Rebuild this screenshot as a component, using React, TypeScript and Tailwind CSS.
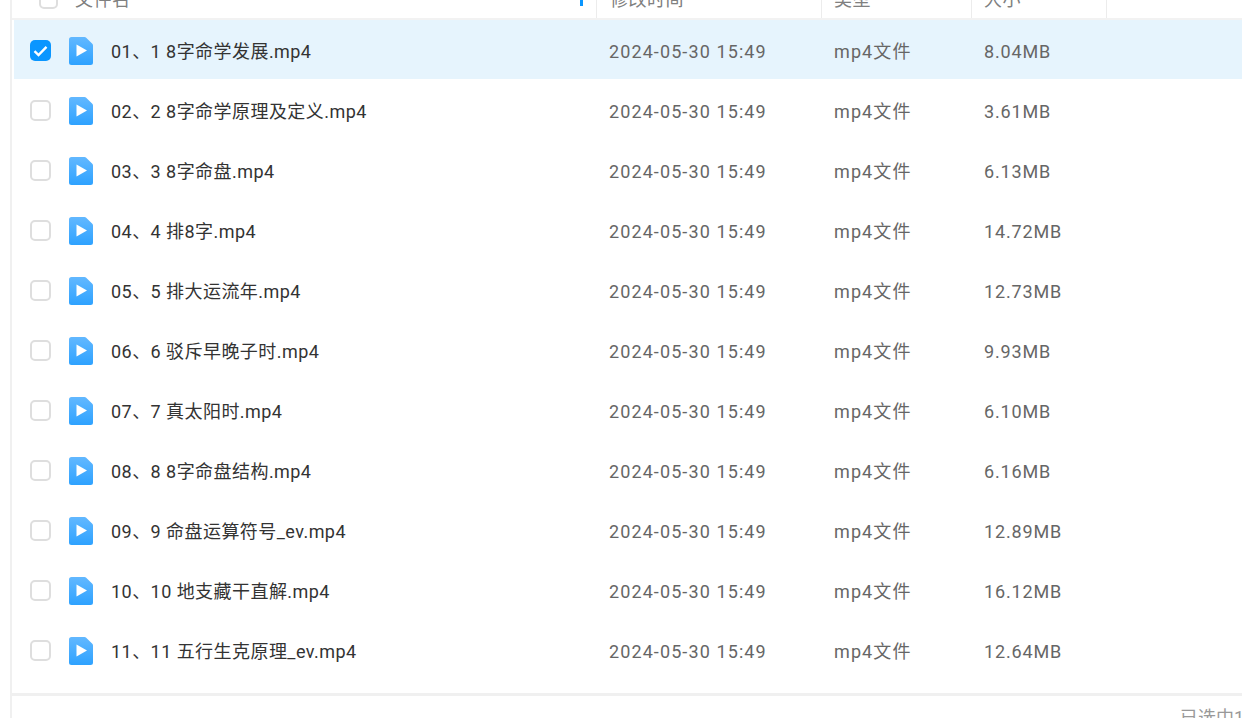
const files = [
  { name: "01、1 8字命学发展.mp4", size: "8.04MB", checked: true },
  { name: "02、2 8字命学原理及定义.mp4", size: "3.61MB" },
  { name: "03、3 8字命盘.mp4", size: "6.13MB" },
  { name: "04、4 排8字.mp4", size: "14.72MB" },
  { name: "05、5 排大运流年.mp4", size: "12.73MB" },
  { name: "06、6 驳斥早晚子时.mp4", size: "9.93MB" },
  { name: "07、7 真太阳时.mp4", size: "6.10MB" },
  { name: "08、8 8字命盘结构.mp4", size: "6.16MB" },
  { name: "09、9 命盘运算符号_ev.mp4", size: "12.89MB" },
  { name: "10、10 地支藏干直解.mp4", size: "16.12MB" },
  { name: "11、11 五行生克原理_ev.mp4", size: "12.64MB" },
];

function VideoIcon() {
  return (
    <svg width="24" height="28" viewBox="0 0 24 28" className="shrink-0">
      <defs>
        <linearGradient id="videoFill" x1="0" y1="0" x2="0" y2="1">
          <stop offset="0" stopColor="#62b8ff" />
          <stop offset="1" stopColor="#2ea2ff" />
        </linearGradient>
      </defs>
      <path d="M2.5 0H15.5Q16.5 0 17.2 .7L23.3 6.8Q24 7.5 24 8.5V25.5A2.5 2.5 0 0 1 21.5 28H2.5A2.5 2.5 0 0 1 0 25.5V2.5A2.5 2.5 0 0 1 2.5 0Z" fill="url(#videoFill)" />
      <path d="M7.5 7.5L18 13.5L7.5 19.5Z" fill="#fff" />
    </svg>
  );
}

function Checkbox({ checked }: { checked?: boolean }) {
  if (checked) {
    return (
      <div className="w-[21px] h-[21px] rounded-[5px] bg-[#0a96ff] flex items-center justify-center shrink-0">
        <svg width="15" height="12" viewBox="0 0 15 12" fill="none">
          <path d="M1.5 6.2L5.5 10L13.5 1.8" stroke="#fff" strokeWidth="2.4" />
        </svg>
      </div>
    );
  }
  return <div className="w-[21px] h-[21px] rounded-[5px] border-2 border-[#dedede] bg-white shrink-0" />;
}

export default function App() {
  return (
    <div className="h-screen overflow-hidden bg-white text-[18px] font-['Roboto','Noto_Sans_CJK_SC',sans-serif]">
      <div className="ml-[10px] h-full border-l-2 border-[#f0f0f0] flex flex-col">
        {/* Table header, scrolled partly out of view */}
        <div className="-mt-[20px] h-[40px] shrink-0 flex border-b-2 border-[#f2f2f2] text-[#808080] tracking-[0.5px]">
          <div className="w-[584px] flex items-center pl-[27px] relative">
            <div className="w-[19px] h-[19px] rounded-[5px] border-2 border-[#dedede] mr-[17px] shrink-0" />
            <span>文件名</span>
            <div className="absolute right-[13px] top-[18px] w-[3px] h-[8px] bg-[#0a96ff]" />
          </div>
          <div className="w-[225px] flex items-center pl-[13px] border-l border-[#ececec]">修改时间</div>
          <div className="w-[150px] flex items-center pl-[12px] border-l border-[#ececec]">类型</div>
          <div className="w-[136px] flex items-center pl-[12px] border-x border-[#ececec]">大小</div>
        </div>

        {/* File rows */}
        <div className="flex-1 pl-[2px]">
          {files.map((f) => (
            <div key={f.name} className={`h-[59px] mb-px pt-[2px] flex items-center ${f.checked ? "bg-[#e6f4fd]" : ""}`}>
              <div className="w-[583px] flex items-center pl-[16px]">
                <Checkbox checked={f.checked} />
                <div className="ml-[18px] flex">
                  <VideoIcon />
                </div>
                <span className="ml-[18px] pt-[2px] text-[#333] tracking-[0.45px]">{f.name}</span>
              </div>
              <div className="w-[225px] pl-[12px] pt-[2px] text-[#666] tracking-[1.1px]">2024-05-30 15:49</div>
              <div className="w-[150px] pl-[12px] pt-[2px] text-[#666] tracking-[1.1px]">mp4文件</div>
              <div className="pl-[12px] pt-[2px] text-[#666] tracking-[0.85px]">{f.size}</div>
            </div>
          ))}
        </div>

        {/* Footer */}
        <div className="h-[25px] shrink-0 border-t-[3px] border-[#f0f0f0] flex pl-[1168px] pt-[8px] text-[#999] whitespace-nowrap">
          <span>已选中1个文件</span>
        </div>
      </div>
    </div>
  );
}
